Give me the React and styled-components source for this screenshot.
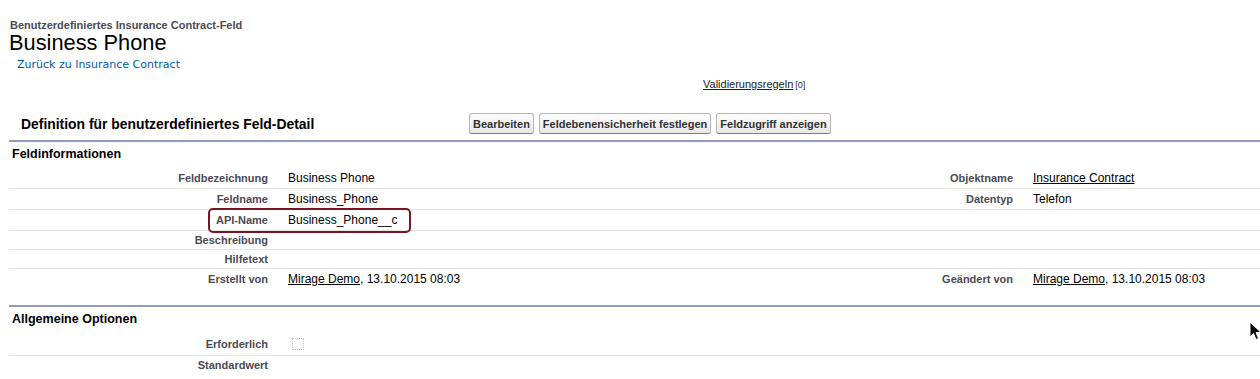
import React from 'react';
import styled, { createGlobalStyle } from 'styled-components';

const GlobalStyle = createGlobalStyle`
    body {
        margin: 0;
        background: #fff;
        font-family: "Liberation Sans", Arial, sans-serif;
        color: #000;
    }
`;

const Page = styled.div`
    position: relative;
    padding: 18px 0 0 9px;
    width: 1251px;
    height: 361px;
    overflow: hidden;
`;

const PageType = styled.div`
    font-size: 11px;
    line-height: 14px;
    font-weight: bold;
    color: #4a4a56;
    padding-left: 1px;
`;

const PageDescription = styled.h1`
    margin: 0;
    font-size: 21.8px;
    line-height: 22px;
    font-weight: normal;
    height: 22px;
`;

const Breadcrumb = styled.a`
    display: block;
    margin-top: 4px;
    padding-left: 8px;
    font-family: "DejaVu Sans", Verdana, sans-serif;
    font-size: 11px;
    line-height: 14px;
    color: #015ba7;
    text-decoration: none;
`;

const HoverLinks = styled.div`
    margin: 5px 0 0 694px;
    font-size: 11px;
    line-height: 14px;

    a {
        color: #222;
        text-decoration: underline;
    }

    span {
        font-size: 9px;
        margin-left: 2px;
        color: #333;
    }
`;

const BlockHeader = styled.div`
    display: flex;
    align-items: center;
    box-sizing: border-box;
    height: 31px;
    padding-bottom: 2px;
    margin-top: 17px;
`;

const BlockTitle = styled.h2`
    margin: 0;
    width: 448px;
    padding-left: 12px;
    font-size: 13.9px;
    font-weight: bold;
    color: #000;
`;

const Buttons = styled.div`
    display: flex;
    gap: 5px;
`;

const Button = styled.button`
    height: 21px;
    padding: 0 3px;
    border: 1px solid #b5b5b5;
    border-bottom-color: #7f7f7f;
    border-radius: 3px;
    background: linear-gradient(#fdfdfd, #e8e8e8);
    font-family: "Liberation Sans", Arial, sans-serif;
    font-size: 11px;
    font-weight: bold;
    color: #333;
    cursor: pointer;
`;

const Section = styled.div`
    border-top: 2px solid #8e9dbe;
    margin-bottom: ${(p) => p.$gap || 0}px;
`;

const SectionTitle = styled.h3`
    margin: 0;
    height: 26px;
    padding: 5px 0 0 3px;
    box-sizing: border-box;
    font-size: 12.5px;
    font-weight: bold;
    color: #000;
`;

const Row = styled.div`
    position: relative;
    display: grid;
    grid-template-columns: 269px 556px 189px 1fr;
    align-items: center;
    height: ${(p) => p.$h}px;
    border-bottom: ${(p) => (p.$last ? 'none' : '1px solid #e4e4e4')};
`;

const Label = styled.div`
    text-align: right;
    padding-right: 10px;
    font-size: 11px;
    font-weight: bold;
    color: #4a4a56;
`;

const Value = styled.div`
    padding-left: 10px;
    font-size: 12px;
    color: #000;

    a {
        color: #000;
        text-decoration: underline;
    }
`;

const Highlight = styled.div`
    position: absolute;
    left: 199px;
    top: -2px;
    width: 199px;
    height: 21px;
    border: 2px solid #7a1422;
    border-radius: 5px;
    pointer-events: none;
`;

const Check = styled.span`
    display: inline-block;
    margin-left: 4px;
    margin-top: 3px;
    width: 10px;
    height: 10px;
    border: 1px dotted #c4c4c4;
`;

const Cursor = styled.svg`
    position: absolute;
    left: 1249px;
    top: 321px;
`;

const fieldRows = [
    { l: 'Feldbezeichnung', v: 'Business Phone', l2: 'Objektname', v2: <a href="#">Insurance Contract</a>, h: 20 },
    { l: 'Feldname', v: 'Business_Phone', l2: 'Datentyp', v2: 'Telefon', h: 20 },
    { l: 'API-Name', v: 'Business_Phone__c', h: 20, mark: true },
    { l: 'Beschreibung', h: 18 },
    { l: 'Hilfetext', h: 18 },
    {
        l: 'Erstellt von',
        v: <><a href="#">Mirage Demo</a>, 13.10.2015 08:03</>,
        l2: 'Geändert von',
        v2: <><a href="#">Mirage Demo</a>, 13.10.2015 08:03</>,
        h: 20,
        last: true,
    },
];

function App() {
    return (
        <>
            <GlobalStyle />
            <Page>
                <PageType>Benutzerdefiniertes Insurance Contract-Feld</PageType>
                <PageDescription>Business Phone</PageDescription>
                <Breadcrumb href="#">Zurück zu Insurance Contract</Breadcrumb>
                <HoverLinks>
                    <a href="#">Validierungsregeln</a>
                    <span>[0]</span>
                </HoverLinks>

                <BlockHeader>
                    <BlockTitle>Definition für benutzerdefiniertes Feld-Detail</BlockTitle>
                    <Buttons>
                        <Button>Bearbeiten</Button>
                        <Button>Feldebenensicherheit festlegen</Button>
                        <Button>Feldzugriff anzeigen</Button>
                    </Buttons>
                </BlockHeader>

                <Section $gap={16}>
                    <SectionTitle>Feldinformationen</SectionTitle>
                    {fieldRows.map((r) => (
                        <Row key={r.l} $h={r.h} $last={r.last}>
                            <Label>{r.l}</Label>
                            <Value>{r.v}</Value>
                            <Label>{r.l2}</Label>
                            <Value>{r.v2}</Value>
                            {r.mark && <Highlight />}
                        </Row>
                    ))}
                </Section>

                <Section>
                    <SectionTitle>Allgemeine Optionen</SectionTitle>
                    <Row $h={22}>
                        <Label>Erforderlich</Label>
                        <Value><Check /></Value>
                        <Label />
                        <Value />
                    </Row>
                    <Row $h={18} $last>
                        <Label>Standardwert</Label>
                        <Value />
                        <Label />
                        <Value />
                    </Row>
                </Section>

                <Cursor width="13" height="20" viewBox="0 0 13 20">
                    <path d="M1 1 L1 16 L4.5 12.5 L7 18.5 L9.5 17.5 L7 11.5 L12 11.5 Z" fill="#000" stroke="#fff" strokeWidth="1" />
                </Cursor>
            </Page>
        </>
    );
}

export default App;
